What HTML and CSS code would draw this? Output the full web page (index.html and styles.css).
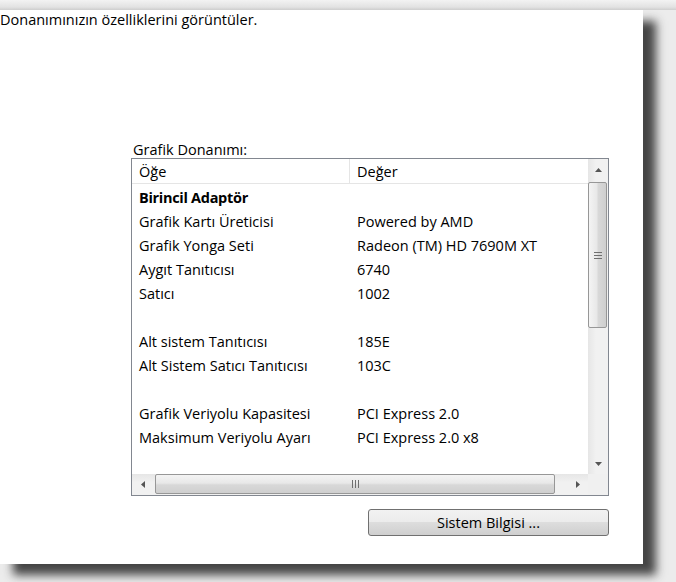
FILE: index.html
```html
<!DOCTYPE html>
<html lang="tr">
<head>
<meta charset="utf-8">
<title>Grafik Donanımı</title>
<link rel="stylesheet" href="styles.css">
</head>
<body>
<div class="window">
  <p class="intro">Donanımınızın özelliklerini görüntüler.</p>
  <div class="group">
    <div class="group-label">Grafik Donanımı:</div>
    <div class="listview">
      <div class="lv-main">
        <div class="lv-content">
          <div class="lv-header">
            <div class="hcol hcol1">Öğe</div>
            <div class="hcol hcol2">Değer</div>
          </div>
          <div class="lv-rows">
            <div class="row"><span class="c1 bold">Birincil Adaptör</span><span class="c2"></span></div>
            <div class="row"><span class="c1">Grafik Kartı Üreticisi</span><span class="c2">Powered by AMD</span></div>
            <div class="row"><span class="c1">Grafik Yonga Seti</span><span class="c2">Radeon (TM) HD 7690M XT</span></div>
            <div class="row"><span class="c1">Aygıt Tanıtıcısı</span><span class="c2">6740</span></div>
            <div class="row"><span class="c1">Satıcı</span><span class="c2">1002</span></div>
            <div class="row"><span class="c1"></span><span class="c2"></span></div>
            <div class="row"><span class="c1">Alt sistem Tanıtıcısı</span><span class="c2">185E</span></div>
            <div class="row"><span class="c1">Alt Sistem Satıcı Tanıtıcısı</span><span class="c2">103C</span></div>
            <div class="row"><span class="c1"></span><span class="c2"></span></div>
            <div class="row"><span class="c1">Grafik Veriyolu Kapasitesi</span><span class="c2">PCI Express 2.0</span></div>
            <div class="row"><span class="c1">Maksimum Veriyolu Ayarı</span><span class="c2">PCI Express 2.0 x8</span></div>
          </div>
        </div>
        <div class="vscroll">
          <div class="sbtn"><svg width="7" height="4" viewBox="0 0 7 4"><path d="M0 4 L3.5 0 L7 4 Z" fill="#555"/></svg></div>
          <div class="vtrack">
            <div class="vthumb">
              <svg width="8" height="7" viewBox="0 0 8 7"><path d="M0 0.5H8M0 3.5H8M0 6.5H8" stroke="#6f6f6f" stroke-width="1"/></svg>
            </div>
          </div>
          <div class="sbtn"><svg width="7" height="4" viewBox="0 0 7 4"><path d="M0 0 L3.5 4 L7 0 Z" fill="#555"/></svg></div>
        </div>
      </div>
      <div class="hscroll-row">
        <div class="hscroll">
          <div class="hbtn"><svg width="4" height="7" viewBox="0 0 4 7"><path d="M4 0 L0 3.5 L4 7 Z" fill="#555"/></svg></div>
          <div class="htrack">
            <div class="hthumb">
              <svg width="7" height="8" viewBox="0 0 7 8"><path d="M0.5 0V8M3.5 0V8M6.5 0V8" stroke="#6f6f6f" stroke-width="1"/></svg>
            </div>
          </div>
          <div class="hbtn"><svg width="4" height="7" viewBox="0 0 4 7"><path d="M0 0 L4 3.5 L0 7 Z" fill="#555"/></svg></div>
        </div>
        <div class="corner"></div>
      </div>
    </div>
    <div class="actions">
      <button class="btn" type="button">Sistem Bilgisi ...</button>
    </div>
  </div>
</div>
</body>
</html>
```
FILE: styles.css
```css
html, body {
  margin: 0;
  padding: 0;
}
body {
  width: 676px;
  height: 582px;
  overflow: hidden;
  background: linear-gradient(to bottom, #f3f3f3 0, #e2e2e2 7px, #cfcfcf 10px, #ececec 10px, #ececec 100%);
  font-family: "Segoe UI", "Open Sans", "Noto Sans", sans-serif;
  font-size: 14.5px;
  color: #000;
}
.window {
  margin-top: 10px;
  width: 643px;
  height: 554px;
  background: #fff;
  box-shadow: 13px 11px 9px rgba(40, 40, 40, 0.85);
  display: flex;
  flex-direction: column;
}
.intro {
  margin: 0;
  padding-top: 1px;
  line-height: 17px;
  height: 17px;
}
.group {
  margin-top: 114px;
  margin-left: 131px;
  width: 478px;
  display: flex;
  flex-direction: column;
}
.group-label {
  padding-left: 2px;
  line-height: 16px;
  height: 16px;
}
.listview {
  border: 1px solid #828790;
  height: 336px;
  display: flex;
  flex-direction: column;
}
.lv-main {
  display: flex;
  height: 315px;
}
.lv-content {
  flex: 1;
  overflow: hidden;
}
.lv-header {
  display: flex;
  height: 24px;
  border-bottom: 1px solid #e5e5e5;
}
.hcol {
  line-height: 25px;
  padding-left: 7px;
  box-sizing: border-box;
}
.hcol1 {
  width: 218px;
  border-right: 1px solid #e5e5e5;
}
.hcol2 {
  flex: 1;
}
.lv-rows {
  padding-top: 2px;
}
.row {
  display: flex;
  height: 24px;
  line-height: 24px;
}
.c1 {
  width: 218px;
  padding-left: 7px;
  box-sizing: border-box;
  white-space: nowrap;
}
.c2 {
  padding-left: 7px;
  white-space: nowrap;
}
.bold {
  font-weight: bold;
  letter-spacing: -0.3px;
}
.vscroll {
  width: 20px;
  display: flex;
  flex-direction: column;
  background: linear-gradient(to right, #e6e6e6, #f1f1f1 40%, #f1f1f1);
}
.sbtn {
  height: 21px;
  display: flex;
  align-items: center;
  justify-content: center;
}
.vtrack {
  flex: 1;
  padding-top: 2px;
}
.vthumb {
  box-sizing: border-box;
  margin: 0 1px 0 0;
  height: 146px;
  border: 1px solid #979797;
  border-radius: 2px;
  background: linear-gradient(to right, #f4f4f4 0, #e8e8e8 45%, #d8d8d8 55%, #cfcfcf 100%);
  display: flex;
  align-items: center;
  justify-content: center;
}
.hscroll-row {
  display: flex;
  height: 21px;
}
.hscroll {
  flex: 1;
  display: flex;
  background: linear-gradient(to bottom, #e6e6e6, #f1f1f1 40%, #f1f1f1);
}
.hbtn {
  width: 21px;
  display: flex;
  align-items: center;
  justify-content: center;
}
.htrack {
  flex: 1;
  padding: 0 12px 0 2px;
  display: flex;
}
.hthumb {
  box-sizing: border-box;
  flex: 1;
  margin-bottom: 1px;
  border: 1px solid #979797;
  border-radius: 2px;
  background: linear-gradient(to bottom, #f4f4f4 0, #e8e8e8 45%, #d8d8d8 55%, #cfcfcf 100%);
  display: flex;
  align-items: center;
  justify-content: center;
}
.corner {
  width: 20px;
  background: #f0f0f0;
}
.actions {
  display: flex;
  justify-content: flex-end;
  margin-top: 13px;
}
.btn {
  width: 241px;
  height: 27px;
  border: 1px solid #707070;
  border-radius: 3px;
  background: linear-gradient(to bottom, #f2f2f2 0, #ebebeb 50%, #dddddd 50%, #cfcfcf 100%);
  font-family: inherit;
  font-size: 14.5px;
  color: #000;
  padding: 0;
}
```
